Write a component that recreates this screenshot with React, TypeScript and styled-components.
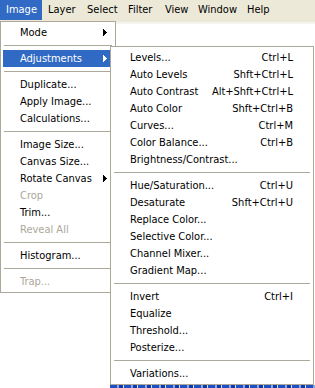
import React from "react";
import styled, { createGlobalStyle } from "styled-components";

const GlobalStyle = createGlobalStyle`
  html, body { margin: 0; padding: 0; background: #fff; }
  body {
    font-family: "DejaVu Sans Condensed", "Liberation Sans", sans-serif;
    font-size: 11px;
    color: #000;
  }
`;

const Screen = styled.div`
  position: relative;
  width: 315px;
  height: 388px;
  overflow: hidden;
  background: #fff;
  display: flex;
  flex-direction: column;
`;

const MenuBar = styled.div`
  display: flex;
  height: 22px;
  background: #ece9d8;
  border-bottom: 2px solid #f5f4ee;
  flex: none;
`;

const MenuTitle = styled.div<{ $active?: boolean; $width: number }>`
  flex: none;
  box-sizing: border-box;
  width: ${(p) => p.$width}px;
  height: 20px;
  line-height: 20px;
  padding-left: 6px;
  white-space: nowrap;
  background: ${(p) => (p.$active ? "#316ac5" : "transparent")};
  color: ${(p) => (p.$active ? "#fff" : "#000")};
`;

const Backdrop = styled.div`
  flex: 1;
  display: flex;
  flex-direction: column;
  justify-content: flex-end;
`;

const CaptionPeek = styled.div`
  height: 3px;
  margin-left: 110px;
  background: repeating-linear-gradient(
    90deg,
    #1f4fc4 0 7px,
    #8ea6de 7px 9px,
    #0c3aa8 9px 13px,
    #d7def0 13px 14px
  );
`;

const Menu = styled.div<{ $top: number; $left: number; $width: number }>`
  position: absolute;
  top: ${(p) => p.$top}px;
  left: ${(p) => p.$left}px;
  width: ${(p) => p.$width}px;
  box-sizing: border-box;
  background: #fff;
  border: 1px solid #aca899;
  padding: 2px 0;
  display: flex;
  flex-direction: column;
`;

const Item = styled.div<{ $active?: boolean; $disabled?: boolean; $padRight: number }>`
  display: flex;
  align-items: center;
  height: 17px;
  margin: 0 2px;
  padding: 0 ${(p) => p.$padRight}px 0 17px;
  white-space: nowrap;
  background: ${(p) => (p.$active ? "#316ac5" : "transparent")};
  color: ${(p) => (p.$active ? "#fff" : p.$disabled ? "#aca899" : "#000")};
`;

const Label = styled.span`
  flex: 1;
`;

const Shortcut = styled.span`
  flex: none;
  text-align: right;
`;

const Arrow = styled.svg`
  flex: none;
  display: block;
`;

const Separator = styled.div`
  height: 1px;
  margin: 4px 3px;
  background: #aca899;
`;

type Entry =
  | { sep: true }
  | { label: string; shortcut?: string; sub?: boolean; active?: boolean; disabled?: boolean };

const imageMenu: Entry[] = [
  { label: "Mode", sub: true },
  { sep: true },
  { label: "Adjustments", sub: true, active: true },
  { sep: true },
  { label: "Duplicate..." },
  { label: "Apply Image..." },
  { label: "Calculations..." },
  { sep: true },
  { label: "Image Size..." },
  { label: "Canvas Size..." },
  { label: "Rotate Canvas", sub: true },
  { label: "Crop", disabled: true },
  { label: "Trim..." },
  { label: "Reveal All", disabled: true },
  { sep: true },
  { label: "Histogram..." },
  { sep: true },
  { label: "Trap...", disabled: true },
];

const adjustMenu: Entry[] = [
  { label: "Levels...", shortcut: "Ctrl+L" },
  { label: "Auto Levels", shortcut: "Shft+Ctrl+L" },
  { label: "Auto Contrast", shortcut: "Alt+Shft+Ctrl+L" },
  { label: "Auto Color", shortcut: "Shft+Ctrl+B" },
  { label: "Curves...", shortcut: "Ctrl+M" },
  { label: "Color Balance...", shortcut: "Ctrl+B" },
  { label: "Brightness/Contrast..." },
  { sep: true },
  { label: "Hue/Saturation...", shortcut: "Ctrl+U" },
  { label: "Desaturate", shortcut: "Shft+Ctrl+U" },
  { label: "Replace Color..." },
  { label: "Selective Color..." },
  { label: "Channel Mixer..." },
  { label: "Gradient Map..." },
  { sep: true },
  { label: "Invert", shortcut: "Ctrl+I" },
  { label: "Equalize" },
  { label: "Threshold..." },
  { label: "Posterize..." },
  { sep: true },
  { label: "Variations..." },
];

const SubArrow: React.FC<{ color: string }> = ({ color }) => (
  <Arrow width="4" height="7" viewBox="0 0 4 7" shapeRendering="crispEdges">
    <rect x="0" y="0" width="1" height="7" fill={color} />
    <rect x="1" y="1" width="1" height="5" fill={color} />
    <rect x="2" y="2" width="1" height="3" fill={color} />
    <rect x="3" y="3" width="1" height="1" fill={color} />
  </Arrow>
);

const MenuList: React.FC<{ entries: Entry[]; padRight: number }> = ({ entries, padRight }) => (
  <>
    {entries.map((e, i) =>
      "sep" in e ? (
        <Separator key={i} />
      ) : (
        <Item key={i} $active={e.active} $disabled={e.disabled} $padRight={padRight}>
          <Label>{e.label}</Label>
          {e.shortcut && <Shortcut>{e.shortcut}</Shortcut>}
          {e.sub && <SubArrow color={e.active ? "#fff" : "#000"} />}
        </Item>
      )
    )}
  </>
);

const titles: { label: string; width: number }[] = [
  { label: "Image", width: 42 },
  { label: "Layer", width: 39 },
  { label: "Select", width: 41 },
  { label: "Filter", width: 37 },
  { label: "View", width: 33 },
  { label: "Window", width: 49 },
  { label: "Help", width: 34 },
];

export default function App() {
  return (
    <>
      <GlobalStyle />
      <Screen>
        <MenuBar>
          {titles.map((t, i) => (
            <MenuTitle key={t.label} $active={i === 0} $width={t.width}>
              {t.label}
            </MenuTitle>
          ))}
        </MenuBar>
        <Backdrop>
          <CaptionPeek />
        </Backdrop>
        <Menu $top={21} $left={0} $width={116}>
          <MenuList entries={imageMenu} padRight={6} />
        </Menu>
        <Menu $top={46} $left={110} $width={204}>
          <MenuList entries={adjustMenu} padRight={18} />
        </Menu>
      </Screen>
    </>
  );
}
